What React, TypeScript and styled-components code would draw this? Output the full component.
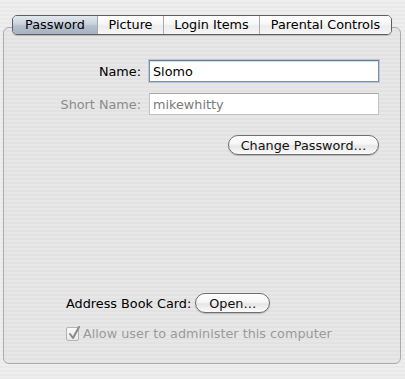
import React from 'react';
import styled, { createGlobalStyle } from 'styled-components';

const GlobalStyle = createGlobalStyle`
    html, body {
        margin: 0;
        padding: 0;
    }
    body {
        font-family: 'DejaVu Sans', 'Liberation Sans', sans-serif;
        font-size: 12.8px;
        color: #000;
    }
`;

const Window = styled.div`
    width: 405px;
    height: 379px;
    box-sizing: border-box;
    padding: 15px 4px 0 3px;
    background: repeating-linear-gradient(
        180deg,
        #eeeeee 0px,
        #eeeeee 2px,
        #e9e9e9 2px,
        #e9e9e9 4px
    );
    display: flex;
    flex-direction: column;
`;

const TabBar = styled.div`
    position: relative;
    z-index: 1;
    display: flex;
    align-self: flex-start;
    margin-left: 9px;
    height: 20px;
    box-sizing: border-box;
    border: 1px solid #5f5f5f;
    border-radius: 5px;
    overflow: hidden;
    box-shadow: 0 1px 1px rgba(0, 0, 0, 0.18);
`;

const Tab = styled.div<{ $active?: boolean; $width: number }>`
    width: ${props => props.$width}px;
    box-sizing: border-box;
    display: flex;
    align-items: center;
    justify-content: center;
    line-height: 1;
    color: #000;
    border-left: 1px solid #a9a9a9;
    background: ${props =>
        props.$active
            ? 'linear-gradient(180deg, #e3e8ee 0%, #c9d1db 45%, #b5c0cd 55%, #a7b3c2 100%)'
            : 'linear-gradient(180deg, #ffffff 0%, #f7f7f7 45%, #ececec 55%, #f6f6f6 100%)'};

    &:first-child {
        border-left: none;
    }
`;

const Panel = styled.div`
    margin-top: -8px;
    height: 337px;
    box-sizing: border-box;
    border: 1px solid #ababab;
    border-radius: 6px;
    background: repeating-linear-gradient(
        180deg,
        #e7e7e7 0px,
        #e7e7e7 2px,
        #e2e2e2 2px,
        #e2e2e2 4px
    );
    padding: 32px 21px 22px 0;
    display: flex;
    flex-direction: column;
`;

const Form = styled.div`
    display: grid;
    grid-template-columns: 137px 230px;
    column-gap: 8px;
    row-gap: 11px;
    align-items: center;
`;

const Label = styled.label<{ $disabled?: boolean }>`
    text-align: right;
    color: ${props => (props.$disabled ? '#8c8c8c' : '#000')};
`;

const Field = styled.div<{ $focused?: boolean; $disabled?: boolean }>`
    height: 22px;
    box-sizing: border-box;
    display: flex;
    align-items: center;
    padding-left: 3px;
    background: #fff;
    color: ${props => (props.$disabled ? '#7a7a7a' : '#000')};
    border: 1px solid ${props => (props.$focused ? '#7d8fa6' : '#c2c2c2')};
    border-top-color: ${props => (props.$focused ? '#6a7d96' : '#a9a9a9')};
    box-shadow: ${props =>
        props.$focused ? '0 0 0 1px #b8c6d8, inset 0 1px 1px rgba(0,0,0,0.15)' : 'none'};
`;

const ButtonRow = styled.div`
    display: flex;
    justify-content: flex-end;
    margin-top: 20px;
`;

const PillButton = styled.div<{ $width: number }>`
    width: ${props => props.$width}px;
    height: 20px;
    box-sizing: border-box;
    border: 1px solid #6f6f6f;
    border-radius: 10px;
    display: flex;
    align-items: center;
    justify-content: center;
    color: #111;
    background: linear-gradient(180deg, #ffffff 0%, #f6f6f6 45%, #e6e6e6 55%, #fbfbfb 100%);
    box-shadow: 0 1px 1px rgba(0, 0, 0, 0.2);
`;

const Spacer = styled.div`
    flex: 1;
`;

const AddressRow = styled.div`
    display: flex;
    align-items: center;
    gap: 4px;
    padding-left: 62px;
`;

const CheckRow = styled.div`
    display: flex;
    align-items: center;
    gap: 4px;
    padding-left: 62px;
    margin-top: 13px;
    color: #9a9a9a;
`;

const CheckBox = styled.div`
    width: 13px;
    height: 14px;
    box-sizing: border-box;
    border: 1px solid #b4b4b4;
    border-radius: 2px;
    background: linear-gradient(180deg, #fafafa, #e9e9e9);
    position: relative;

    svg {
        position: absolute;
        left: 1px;
        top: -3px;
    }
`;

const tabs = [
    { label: 'Password', width: 84 },
    { label: 'Picture', width: 66 },
    { label: 'Login Items', width: 96 },
    { label: 'Parental Controls', width: 132 },
];

const App = () => (
    <>
        <GlobalStyle />
        <Window>
            <TabBar>
                {tabs.map((t, i) => (
                    <Tab key={t.label} $active={i === 0} $width={t.width}>
                        {t.label}
                    </Tab>
                ))}
            </TabBar>
            <Panel>
                <Form>
                    <Label>Name:</Label>
                    <Field $focused>Slomo</Field>
                    <Label $disabled>Short Name:</Label>
                    <Field $disabled>mikewhitty</Field>
                </Form>
                <ButtonRow>
                    <PillButton $width={151}>Change Password…</PillButton>
                </ButtonRow>
                <Spacer />
                <AddressRow>
                    <span>Address Book Card:</span>
                    <PillButton $width={75}>Open…</PillButton>
                </AddressRow>
                <CheckRow>
                    <CheckBox>
                        <svg width="13" height="15" viewBox="0 0 13 15">
                            <path
                                d="M2 9 L5 13 L11 2"
                                fill="none"
                                stroke="#8a8a8a"
                                strokeWidth="2"
                                strokeLinecap="round"
                                strokeLinejoin="round"
                            />
                        </svg>
                    </CheckBox>
                    <span>Allow user to administer this computer</span>
                </CheckRow>
            </Panel>
        </Window>
    </>
);

export default App;
